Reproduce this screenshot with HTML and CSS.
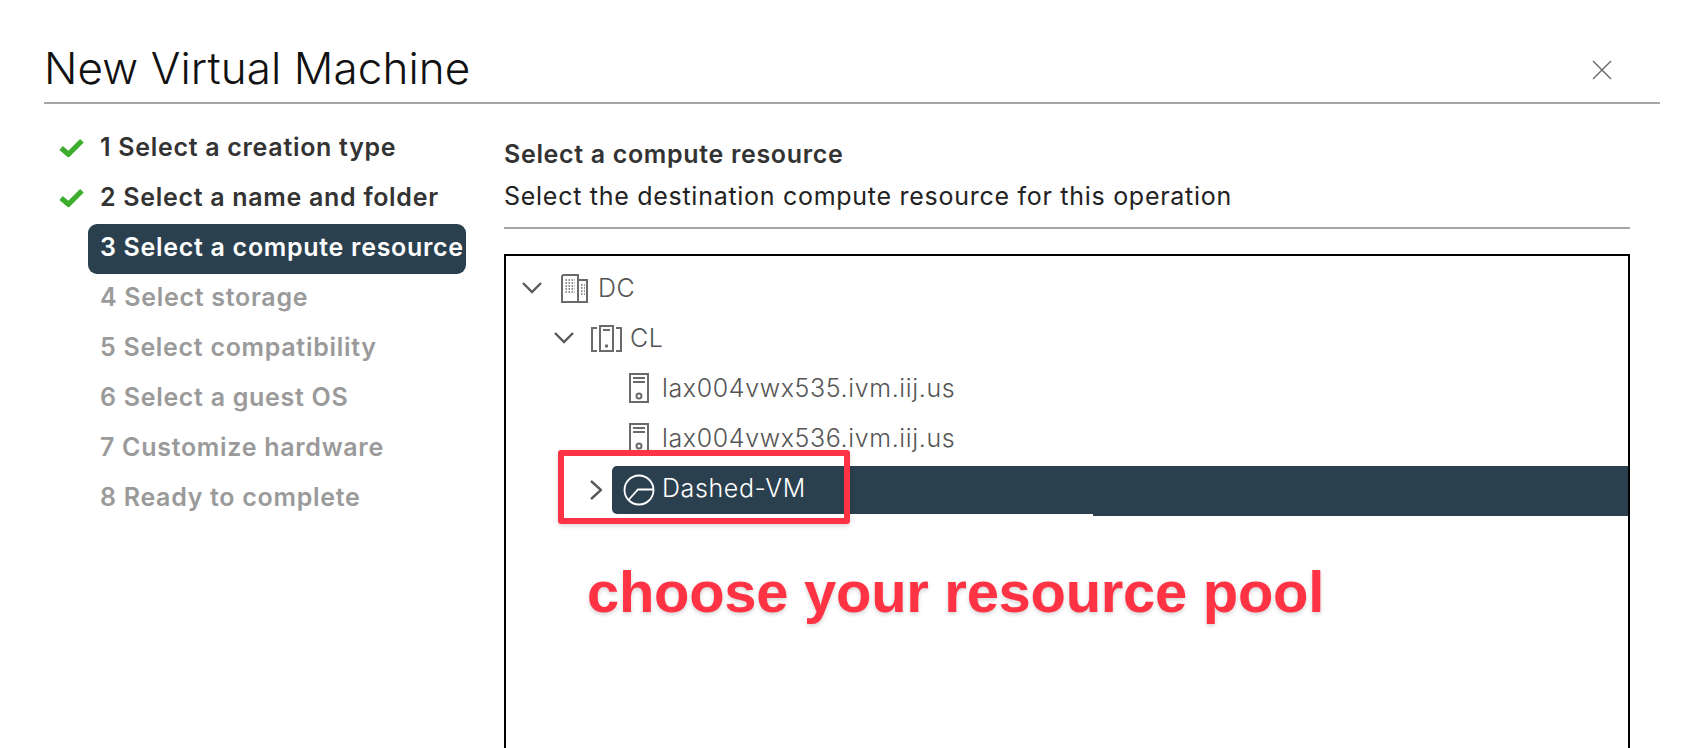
FILE: index.html
```html
<!DOCTYPE html>
<html lang="en">
<head>
<meta charset="utf-8">
<title>New Virtual Machine</title>
<link rel="stylesheet" href="styles.css">
</head>
<body>
<div class="wizard">
  <header class="head">
    <h1 class="title">New Virtual Machine</h1>
    <svg class="close" viewBox="0 0 20 20"><path d="M1 1 19 19M19 1 1 19"/></svg>
  </header>
  <div class="main">
    <nav class="steps">
      <div class="step done"><svg class="check" viewBox="0 0 24 18"><path d="M2 9.5 9 15.5 22 2.5"/></svg>1 Select a creation type</div>
      <div class="step done"><svg class="check" viewBox="0 0 24 18"><path d="M2 9.5 9 15.5 22 2.5"/></svg>2 Select a name and folder</div>
      <div class="step active">3 Select a compute resource</div>
      <div class="step todo">4 Select storage</div>
      <div class="step todo">5 Select compatibility</div>
      <div class="step todo">6 Select a guest OS</div>
      <div class="step todo">7 Customize hardware</div>
      <div class="step todo">8 Ready to complete</div>
    </nav>
    <section class="content">
      <h2 class="sub-title">Select a compute resource</h2>
      <p class="sub-text">Select the destination compute resource for this operation</p>
      <div class="tree">
        <div class="row lvl-dc">
          <svg class="chev" viewBox="0 0 20 12"><path d="M1 1 10 10 19 1"/></svg>
          <svg class="ico ico-dc" viewBox="0 0 27 29"><path d="M1 3V28H17V1H3Q1 1 1 3ZM17 6H26V28H17M1 28H26"/><path class="dots" d="M4.500 6H14M4.500 9H14M4.500 12H14M4.500 15H14M4.500 18H14M20 11H24M20 14H24M20 17H24M20 20H24"/></svg>
          <span>DC</span>
        </div>
        <div class="row lvl-cl">
          <svg class="chev" viewBox="0 0 20 12"><path d="M1 1 10 10 19 1"/></svg>
          <svg class="ico ico-cl" viewBox="0 0 31 27"><path d="M6 3H1V26H6M25 3H30V26H25M9 1H22V26H9ZM12 5H19"/><circle class="dot" cx="15.500" cy="21" r="1.700"/></svg>
          <span>CL</span>
        </div>
        <div class="row lvl-host">
          <svg class="ico ico-host" viewBox="0 0 20 30"><path d="M1 1H19V29H1ZM4 5H16M4 9H16"/><circle cx="10" cy="23" r="2.500"/></svg>
          <span>lax004vwx535.ivm.iij.us</span>
        </div>
        <div class="row lvl-host">
          <svg class="ico ico-host" viewBox="0 0 20 30"><path d="M1 1H19V29H1ZM4 5H16M4 9H16"/><circle cx="10" cy="23" r="2.500"/></svg>
          <span>lax004vwx536.ivm.iij.us</span>
        </div>
        <div class="row lvl-pool">
          <svg class="chev-right" viewBox="0 0 12 20"><path d="M1 1 11 10 1 19"/></svg>
          <div class="pool-bar">
            <svg class="ico-pool" viewBox="0 0 32 32"><circle cx="16" cy="16" r="14.500"/><path d="M5.500 26 15 15.500H30.500"/></svg>
            <span>Dashed-VM</span>
          </div>
        </div>
        <div class="mark"></div>
        <div class="note">choose your resource pool</div>
      </div>
    </section>
  </div>
</div>
</body>
</html>
```
FILE: styles.css
```css
* { box-sizing: border-box; }
html, body { margin: 0; height: 748px; overflow: hidden; background: #fff; }
body { font-family: Inter, "Noto Sans", sans-serif; color: #565656; }
.wizard { width: 1692px; height: 748px; padding: 0 32px 0 44px; overflow: hidden; display: flex; flex-direction: column; }
.head { height: 104px; flex: none; display: flex; align-items: flex-start; justify-content: space-between; border-bottom: 2px solid #a6a6a6; padding: 32px 48px 0 0; }
.title { margin: 0; font-size: 44px; font-weight: 300; color: #111; line-height: 72px; letter-spacing: 0.1px; }
.close { width: 20px; height: 20px; margin-top: 28px; fill: none; stroke: #666; stroke-width: 1.4; }
.main { display: flex; flex: 1; min-height: 0; padding: 20px 30px 0 0; }
.steps { width: 460px; flex: none; margin-top: -2px; }
.step { height: 50px; line-height: 50px; padding-left: 56px; font-size: 25px; letter-spacing: 0.7px; font-weight: 600; position: relative; white-space: nowrap; color: #333; }
.check { position: absolute; left: 15px; top: 16px; width: 25px; height: 19px; fill: none; stroke: #3cad2c; stroke-width: 5; }
.active { margin: 2px 0 -2px 44px; width: 378px; padding-left: 12px; line-height: 47px; background: #2b404f; color: #fff; border-radius: 9px; }
.todo { color: #9a9a9a; }
.content { flex: 1; min-width: 0; display: flex; flex-direction: column; }
.sub-title { margin: 9px 0 0; font-size: 25px; letter-spacing: 0.67px; font-weight: 600; line-height: 42px; color: #333; }
.sub-text { margin: 0; font-size: 25px; letter-spacing: 0.72px; line-height: 42px; color: #222; padding-bottom: 10px; border-bottom: 2px solid #a6a6a6; }
.tree { margin-top: 25px; flex: 1; border: 2px solid #000; border-bottom: 0; position: relative; padding-top: 7px; font-size: 25px; font-weight: 350; letter-spacing: 0.62px; color: #555; }
.row { height: 50px; display: flex; align-items: center; }
.lvl-dc { padding-left: 16px; }
.lvl-cl { padding-left: 48px; }
.lvl-host { padding-left: 123px; }
.lvl-pool { padding-left: 84px; height: 48px; margin-top: 3px; }
.lvl-pool span { margin-top: -4px; }
.chev { width: 20px; height: 12px; fill: none; stroke: #5a5a5a; stroke-width: 2.4; flex: none; }
.ico { fill: none; stroke: #6a6a6a; stroke-width: 2; flex: none; }
.ico-dc { width: 27px; height: 29px; margin: 0 10px 0 19px; }
.dots { stroke-width: 1.5; stroke-dasharray: 1.5 1.5; }
.ico-cl { width: 31px; height: 27px; margin: 0 8px 0 17px; }
.dot { fill: #6a6a6a; stroke: none; }
.ico-host { width: 20px; height: 30px; margin-right: 13px; }
.chev-right { width: 12px; height: 20px; fill: none; stroke: #5a5a5a; stroke-width: 2.4; flex: none; margin-right: 10px; }
.pool-bar { flex: 1; height: 48px; background: #2b404f; border-radius: 5px 0 0 5px; display: flex; align-items: center; padding-left: 11px; color: #fff; position: relative; }
.pool-bar::after { content: ""; position: absolute; left: 481px; right: 0; top: 100%; height: 2px; background: #2b404f; }
.ico-pool { width: 32px; height: 32px; fill: none; stroke: #fff; stroke-width: 1.8; margin-right: 7px; flex: none; }
.mark { position: absolute; left: 52px; top: 194px; width: 292px; height: 74px; border: 6px solid #ff3344; border-radius: 3px; box-shadow: 0 2px 5px rgba(0,0,0,.15); }
.note { position: absolute; left: 81px; top: 303px; font-family: "Liberation Sans", Arial, sans-serif; font-weight: 700; font-size: 58px; letter-spacing: -0.3px; line-height: 66px; color: #ff3344; white-space: nowrap; text-shadow: 0 2px 4px rgba(0,0,0,.18); }
```
